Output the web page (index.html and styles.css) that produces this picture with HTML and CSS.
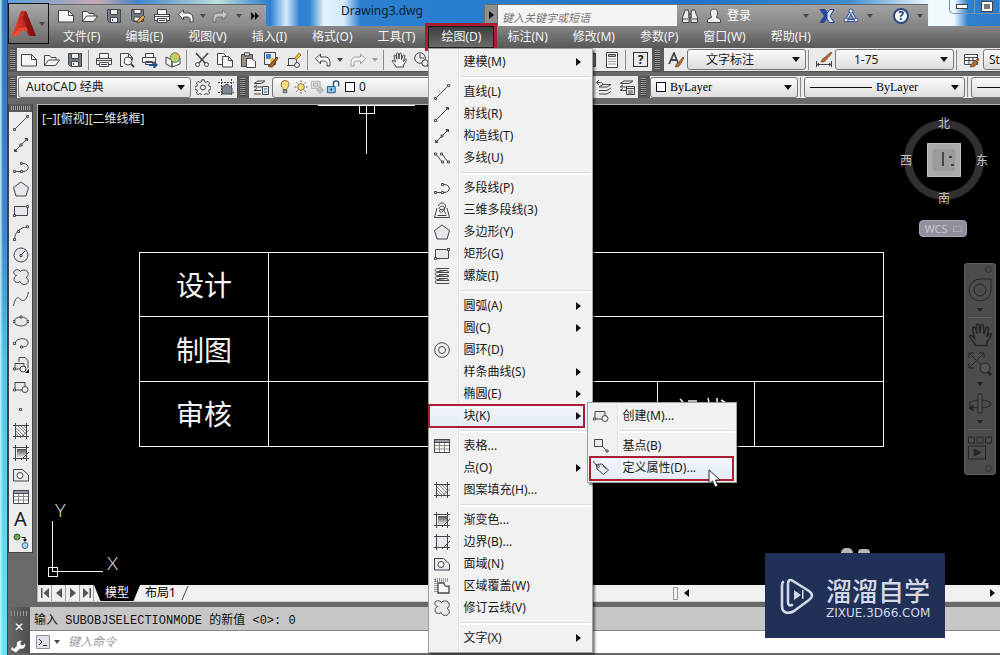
FILE: index.html
```html
<!DOCTYPE html>
<html lang="zh-CN">
<head>
<meta charset="utf-8">
<title>Drawing3.dwg</title>
<link rel="stylesheet" href="styles.css">
</head>
<body>
<svg class="sprite" aria-hidden="true">
  <symbol id="new" viewBox="0 0 16 16"><path class="paper" d="M.5 2.500h10l5 5v6.500H.5z"/><path d="M10.500 2.500v5h5"/></symbol>
  <symbol id="open" viewBox="0 0 16 16"><path class="paper" d="M.5 13.500v-10h5l1.500 2h5v3"/><path class="paper" d="M.5 13.500l4-5.500h11l-4 5.500z"/></symbol>
  <symbol id="save" viewBox="0 0 16 16"><path class="slate" d="M1.500 1.500h13v13h-11l-2-2z"/><path fill="#eee" d="M4.500 1.500h7v5h-7zM4.500 9.500h7v5h-7z"/><path d="M6.500 11v2"/></symbol>
  <symbol id="saveas" viewBox="0 0 16 16"><path class="slate" d="M1.500 1.500h12v12h-10l-2-2z"/><path fill="#eee" d="M4 1.500h7v4H4zM4 9h6v4H4z"/><path fill="#e8a440" stroke="#6b4a20" d="M7 15l1-3 5-5 2 2-5 5z"/></symbol>
  <symbol id="print" viewBox="0 0 16 16"><path class="paper" d="M3.500 6V1.500h9V6M.5 6.500h15v6H.5z"/><path class="paper" d="M3.500 10.500h9v4h-9z"/><path d="M1 8.500h14M5 12.500h6"/></symbol>
  <symbol id="preview" viewBox="0 0 16 16"><path class="paper" d="M4 14.500H1.500v-13h8l4 4V8M9.500 1.500v4h4"/><circle cx="9" cy="9" r="4" fill="#f8f8f8"/><path stroke-width="2" d="M12 12l3 3"/></symbol>
  <symbol id="publish" viewBox="0 0 16 16"><path class="paper" d="M3.500 5V1.500h8V5M.5 5.500h13v5H.5zM3.500 9.500h7v3h-7z"/><path stroke="#1d4f91" stroke-width="2" d="M7 13h7M11.500 10l3 3-3 3"/></symbol>
  <symbol id="globe" viewBox="0 0 16 16"><path class="paper" d="M1 5l6 3v7l-6-3zM7 8l8-2v6l-8 3z"/><circle cx="10" cy="5.500" r="4.800" fill="#b4cf72" stroke="#6c7f3c"/><path fill="#e6b756" stroke="none" d="M10 1.500c3 0 4.500 2 4 4.500L10 5z"/></symbol>
  <symbol id="cut" viewBox="0 0 16 16"><path stroke-width="1.500" d="M2 1l9 10M14 1L5 11"/><circle cx="3.500" cy="12.500" r="2"/><circle cx="12.500" cy="12.500" r="2"/></symbol>
  <symbol id="copy" viewBox="0 0 16 16"><path class="paper" d="M.5 1.500h6l3 3v8h-9z"/><path class="paper" d="M5.500 4.500h6l4 4v6.500h-10zM11.500 4.500v4h4"/></symbol>
  <symbol id="paste" viewBox="0 0 16 16"><path fill="#9a8c80" d="M1.500 2.500h11v12h-11z"/><path fill="#ddd" d="M4.500.8h5v3h-5z"/><path fill="#fafafa" d="M6.500 6.500h5l4 3v6h-9z"/></symbol>
  <symbol id="match" viewBox="0 0 16 16"><path fill="#e9f0f7" d="M1.500.5h11v12h-11z"/><path fill="#4285c4" stroke="none" d="M3 2h5v5H3z"/><path fill="#e9bb4b" stroke="none" d="M7 6h4v4H7z"/><path fill="#a86427" stroke="#6a3c14" d="M8 15c-2 0-3-1-3-1 3 0 2-3 4-4l5-5 1 1-4 6c0 2-1 3-3 3z"/></symbol>
  <symbol id="blockedit" viewBox="0 0 16 16"><path d="M2.500 13V6.500h8v7H5M1 13.500h4"/><circle cx="11" cy="13" r="2.500" fill="#eee"/><path fill="#f0b93c" stroke="#a8762a" d="M9 6l4-5 2 2-5 5z"/></symbol>
  <symbol id="undo" viewBox="0 0 16 16"><path class="paper" d="M.5 6.500l5-4.500v3h4c4 0 6 2 5.500 9h-3c.5-4-.5-5-3-5H5.500v3z"/></symbol>
  <symbol id="redo" viewBox="0 0 16 16"><path class="paper" d="M15.500 6.500l-5-4.500v3h-4C2.500 5 .5 7 1 14h3c-.5-4 .5-5 3-5h3.500v3z"/></symbol>
  <symbol id="hand" viewBox="0 0 16 16"><path class="paper" d="M5 15c-1-3-3-4-4-6 1-1.500 2.500 0 3.500 1L3 4c0-1.500 1.500-1.500 2 0l1 3-.5-5c0-1.500 2-1.500 2 0L8 7l.5-5c.3-1.500 1.900-1.300 1.900.2L10.500 7.500 12 3.500c.6-1.300 2-.8 1.700.7L12.500 9.500l1.500-2c1-1 2 0 1.300 1L12.500 13v2z"/></symbol>
  <symbol id="zoomrt" viewBox="0 0 16 16"><circle cx="6" cy="6" r="5.300"/><path d="M6 2v4h4"/><circle cx="11" cy="11" r="3.200" fill="#eee"/><path stroke-width="2" d="M13.500 13.500l2 2"/></symbol>
  <symbol id="calc" viewBox="0 0 16 16"><path class="paper" d="M2.500.5h11v15h-11z"/><path fill="#aaa" d="M4.500 2.500h7v2h-7z"/><path stroke-dasharray="1 1" d="M4.500 7h8M4.500 9.500h8M4.500 12h8"/></symbol>
  <symbol id="textstyle" viewBox="0 0 16 16"><path stroke-width="1.800" d="M1 12L6 1l4 10M3 8h6"/><path fill="#b06c35" stroke="#6a3c14" stroke-width=".6" d="M7 15c1-1 1-4 3-4l5-6 1 1-4 7c-1 2-3 2-5 2z"/></symbol>
  <symbol id="dimstyle" viewBox="0 0 16 16"><path d="M.5 9v6M15.500 9v6M1 12.500h14M3 11l-2 1.500L3 14M13 11l2 1.500-2 1.500"/><path fill="#b06c35" stroke="#6a3c14" stroke-width=".6" d="M5 10c1-1 1-4 3-4l7-6 1 1-6 7c-1 2-3 2-5 2z"/></symbol>
  <symbol id="tablestyle" viewBox="0 0 16 16"><path class="paper" d="M.5 2.500h13v10H.5z"/><path d="M1 5.500h12M1 8.500h12M5 5v7M9 5v7"/><path fill="#b06c35" stroke="#6a3c14" stroke-width=".6" d="M6 15c1-1 1-4 3-4l5-5 1 1-3 6c-1 2-4 2-6 2z"/></symbol>
  <symbol id="gear" viewBox="0 0 16 16"><path d="M6.800.8h2.400l.5 2 1.500.6 1.800-1 1.600 1.600-1 1.800.6 1.500 2 .5v2.400l-2 .5-.6 1.500 1 1.800-1.600 1.600-1.800-1-1.500.6-.5 2H6.800l-.5-2-1.500-.6-1.800 1L1.400 14l1-1.800-.6-1.500-2-.5V7.800l2-.5.6-1.500-1-1.800L3 2.400l1.800 1 1.500-.6z"/><circle cx="8" cy="8.500" r="2.500"/></symbol>
  <symbol id="wsave" viewBox="0 0 16 16"><path stroke-dasharray="2 1" d="M3.500 0v16M13.500 0v16M0 3.500h16M0 13.500h16"/><path fill="#7c8794" d="M4 8l5-3 5 4v6H4z"/></symbol>
  <symbol id="layers" viewBox="0 0 16 16"><path d="M1 4.500l4-2.500h7L8 4.500zM1 8h8M1 8l3-2M1 11.500h7M1 11.500l3-2M1 15h7"/><path fill="#e4edf6" d="M9.500 7.500h6v8h-6z"/><path stroke="#1b5a96" d="M11 10h3M11 13h3"/></symbol>
  <symbol id="layerprev" viewBox="0 0 16 16"><path d="M3 8l4-2.500h8L11 8zM3 11.500h8l4-2.500M3 15h8l4-2.500M.5 3.500h4c2 0 2 1 2 2M3 1L.5 3.500 3 6"/></symbol>
  <symbol id="layerstate" viewBox="0 0 16 16"><path d="M1 4.500L5 2h9l-4 2.500zM1 8h7M1 8l3-2M1 11.500h6M1 11.500l3-2"/><path fill="#e8e8e8" d="M7.500 7.500h8v8h-8zM7.500 9.500h8M9 12h5M9 14h5"/></symbol>
  <symbol id="bulb" viewBox="0 0 16 16"><path fill="#f5de7a" stroke="#77662f" d="M6 11C6 9 3.500 8 3.500 5a4.500 4.500 0 019 0c0 3-2.500 4-2.500 6z"/><path fill="#bbb" d="M6 11.500h4v3H6z"/></symbol>
  <symbol id="sun" viewBox="0 0 16 16"><circle cx="8" cy="8" r="3.800" fill="#f5de7a" stroke="#77662f"/><path d="M8 .5v2M8 13.500v2M.5 8h2M13.500 8h2M2.700 2.700l1.400 1.400M12 12l1.400 1.400M2.700 13.300L4.100 12M12 4l1.400-1.400"/></symbol>
  <symbol id="freeze" viewBox="0 0 16 16"><g stroke="#aaa"><path fill="#e0e0e0" d="M1.500 1.500h10v8h-10z"/><path d="M4 4h5v3H4z"/><circle cx="11.500" cy="11.500" r="3" fill="#ddd"/><path d="M11.500 7v9M7 11.500h9"/></g></symbol>
  <symbol id="lock" viewBox="0 0 16 16"><path fill="#8ec7ea" stroke="#1c4f75" d="M1.500 7.500h9v7h-9z"/><path stroke="#1c4f75" stroke-width="1.500" d="M8.500 7V4c0-4 6-4 6 0v3M6 9.500v3"/></symbol>
  <symbol id="line" viewBox="0 0 16 16"><path d="M2 14L14 2"/><path class="node" d="M.5 13.500h2v2h-2zM13.500.5h2v2h-2z"/></symbol>
  <symbol id="ray" viewBox="0 0 16 16"><path d="M2 14L14 2"/><path class="node" d="M.5 13.500h2v2h-2z"/><path class="solid" d="M12 1.500h2.500V4z"/></symbol>
  <symbol id="xline" viewBox="0 0 16 16"><path d="M2 14L14 2"/><path class="node" d="M7 7h2v2H7z"/><path class="solid" d="M12 1.500h2.500V4zM1.500 12v2.500H4z"/></symbol>
  <symbol id="mline" viewBox="0 0 16 16"><path d="M2 4l6 8M8 4l6 8"/><path class="node" d="M.5 3h2v2h-2zM6.500 3h2v2h-2zM7.500 11h2v2h-2zM13.500 11h2v2h-2z"/></symbol>
  <symbol id="pline" viewBox="0 0 16 16"><path d="M1 12.500h9c7 0 7-8 0-8"/><path class="node" d="M.5 11.500h2v2h-2zM7.500 11.500h2v2h-2zM7.500 3.500h2v2h-2z"/></symbol>
  <symbol id="pline3" viewBox="0 0 16 16"><path d="M3 6L.5 15.500h15L13 6M3.500 13.500h9"/><path d="M4.500 4c0-4 7-4 7 0s-6 5-6 2c0-2 4-3 5 0s-5 6-5 3 5-2 6 3"/></symbol>
  <symbol id="poly" viewBox="0 0 16 16"><path class="shade" d="M8 1l7.500 5.500L13 15H3L.5 6.500z"/></symbol>
  <symbol id="rect" viewBox="0 0 16 16"><path class="shade" d="M1.500 3.500h13v9h-13z"/><path class="node" d="M.5 11.500h2v2h-2zM13.500 2.500h2v2h-2z"/></symbol>
  <symbol id="helix" viewBox="0 0 16 16"><path d="M15 .5H4c-4 0-4 3 0 3l8 1c3 0 3-2 0-2H5M15 4.500H4c-4 0-4 3 0 3l8 1c3 0 3-2 0-2H5M15 8.500H4c-4 0-4 3 0 3l8 1c3 0 3-2 0-2H5M15 12.500H4c-4 0-4 3 0 3h11"/></symbol>
  <symbol id="arc" viewBox="0 0 16 16"><path d="M1.500 14C2 7 7 2.500 14 2"/><path class="node" d="M.5 13.500h2v2h-2zM4.500 5.500h2v2h-2zM13.500.8h2v2h-2z"/></symbol>
  <symbol id="circle" viewBox="0 0 16 16"><circle class="shade" cx="8" cy="8" r="7"/><path d="M8 8l4-4"/><path class="node" d="M7 7.500h2v2H7z"/></symbol>
  <symbol id="cloud" viewBox="0 0 16 16"><path class="shade" d="M7.500 2.500C6 0 1 0 .8 3.500.8 5 2 6 3.500 6.500 0 8 0 13.500 4.500 13.500c1 0 2-.5 2.500-1 1 4 8 4 8.300-.5 0-2-1-3-2.300-3.500C16.500 7 16 1 11 1c-1.500 0-3 .5-3.500 1.500z"/></symbol>
  <symbol id="spline" viewBox="0 0 16 16"><path d="M.5 15C2 8 4 5 6.500 7.500S13 12 15.500 1"/></symbol>
  <symbol id="ellipse" viewBox="0 0 16 16"><ellipse class="shade" cx="8" cy="8.500" rx="7" ry="4.500"/><path class="node" d="M0 7.500h2v2H0zM14 7.500h2v2h-2zM7 3h2v2H7z"/></symbol>
  <symbol id="earc" viewBox="0 0 16 16"><path d="M2 8C3 3 14 2 15 7c.5 4-3 5-6 5"/><path class="node" d="M.5 7.500h2v2h-2zM7.500 11h2v2h-2z"/></symbol>
  <symbol id="insert" viewBox="0 0 16 16"><path class="shade" d="M6 5V.500h6l3 3V11"/><path class="shade" d="M2 12V6.500h9V12z"/><circle cx="10" cy="12" r="3" fill="#eee"/><path class="node" d="M.5 11h2v2h-2z"/><path fill="#111" stroke="none" d="M16 12v4h-4z"/></symbol>
  <symbol id="block" viewBox="0 0 16 16"><path class="shade" d="M2 11V3.500h10V11z"/><circle cx="12" cy="10.500" r="3" fill="#eee"/><path class="node" d="M.5 10h2v2h-2z"/></symbol>
  <symbol id="point" viewBox="0 0 16 16"><path class="node" d="M6.500 7.500h2v2h-2z"/></symbol>
  <symbol id="hatch" viewBox="0 0 16 16"><path d="M2.500 0v16M13.500 0v16M0 2.500h16M0 13.500h16"/><path stroke-width=".6" d="M3 5l8 8M3 8l5 5M3 11l2 2M5 3l8 8M8 3l5 5M11 3l2 2M7 15l9-8"/></symbol>
  <symbol id="gradient" viewBox="0 0 16 16"><path d="M2.500 0v16M13.500 0v16M0 2.500h16M0 13.500h16"/><path fill="url(#fade)" stroke="none" d="M4 4h9v5l-4 4H4z"/><path d="M8 15l8-8"/></symbol>
  <symbol id="boundary" viewBox="0 0 16 16"><path class="shade" d="M2.500 2.500h11v11h-11z"/><path d="M2.500 0v16M13.500 0v16M0 2.500h16M0 13.500h16M8 15l8-8"/></symbol>
  <symbol id="region" viewBox="0 0 16 16"><path class="shade" d="M.5 2.500h9l6 5.500v6H.5z"/><circle cx="7" cy="8.500" r="3" fill="#f7f7f7"/></symbol>
  <symbol id="wipe" viewBox="0 0 16 16"><path stroke-dasharray="1 1" d="M1 3h14M1 1h14M1 1v13M3 3v12"/><path fill="#fff" stroke-width="1.300" d="M4 5h6c0 3 2 4 5 3v7H4z"/></symbol>
  <symbol id="table" viewBox="0 0 16 16"><path fill="#fff" d="M.5 1.500h15v13H.5z"/><path fill="#9b9ba5" d="M.5 1.500h15v3H.5z"/><path d="M1 7.500h14M1 11h14M5.500 5v9M10.500 5v9" stroke="#888"/></symbol>
  <symbol id="addsel" viewBox="0 0 16 16"><circle cx="4" cy="4" r="3" fill="#6da852" stroke="#365c28"/><circle cx="12" cy="12.500" r="3" fill="#a9d5ef" stroke="#2e6f99"/><path stroke="#111" stroke-width="1.200" d="M8.500 4.500H12V8M10.500 6.500L12 8l1.500-1.500"/></symbol>
  <symbol id="donut" viewBox="0 0 16 16"><circle cx="8" cy="8" r="7.300"/><circle cx="8" cy="8" r="3.500"/></symbol>
  <symbol id="base" viewBox="0 0 16 16"><path class="shade" d="M1.500 1.500h8v7h-8z"/><path d="M9 8l5 5"/><path class="node" d="M13 12h2v2h-2z"/></symbol>
  <symbol id="tag" viewBox="0 0 16 16"><path class="shade" d="M3 4.500l6-.5 6.500 6-5 4.500L4 9z"/><path d="M.5 1l1 2.500 3 2M10 6l3.500 3"/><circle cx="5.500" cy="6.500" r="1"/></symbol>
  <symbol id="binoc" viewBox="0 0 16 16"><path fill="#eee" d="M2 6l1-4h3l1 4v8.500H.5V9zM9 6l1-4h3l1 4 1.500 3v5.500H9zM7 6h2v4H7z"/><path d="M1 11h5M10 11h5"/></symbol>
  <symbol id="user" viewBox="0 0 16 16"><path fill="#eee" d="M8 1c5 0 4 7 2 8l4.500 2.500v3H1.500v-3L6 9C4 8 3 1 8 1z"/></symbol>
  <symbol id="exchange" viewBox="0 0 16 16"><path fill="#27479c" stroke="#27479c" d="M1 1.500h5l3 4.500-1 4-3 4.500H1L5.500 8z"/><path fill="#dfe8fb" stroke="#27479c" d="M15 1.500h-4L8 5.500v5l2.500 4H15L11 8z"/></symbol>
  <symbol id="a360" viewBox="0 0 16 16"><path fill="#e7eefc" stroke="#27479c" d="M8 1.500l6.500 12h-13zM8 6l-3 5.500h6z"/><g fill="#fff" stroke="#27479c"><circle cx="8" cy="3" r="2"/><circle cx="3" cy="12" r="2"/><circle cx="13" cy="12" r="2"/></g></symbol>
  <symbol id="wheel" viewBox="0 0 24 24"><path d="M12 1h11v11a11 11 0 11-11-11z"/><circle cx="12" cy="12" r="6"/></symbol>
  <symbol id="extents" viewBox="0 0 24 24"><path d="M1 1l15 15M16 1L1 16M1 6V1h5M11 1h5v5M1 11v5h5"/><circle cx="17" cy="16" r="5" fill="#555"/><path stroke-width="3" d="M20 20l3 3"/></symbol>
  <symbol id="orbit" viewBox="0 0 24 24"><ellipse cx="12" cy="13" rx="11" ry="4"/><path fill="#555" d="M10 22V3h4v19z"/><path class="solid" d="M5 14v6l-4-3z"/></symbol>
  <symbol id="motion" viewBox="0 0 24 24"><path d="M.5 1h6v6h-6zM9 1h6v6H9zM17.500 1h6v6h-6zM.5 10h17v13H.5z"/><path class="solid" d="M6 13l7 3.500L6 20z"/></symbol>
  <symbol id="wrench" viewBox="0 0 16 16"><path fill="#fff" stroke="none" d="M1 10l2 2 3-3c-1-4 2-6 5-5L9 6l1 2 2 .5 2-2c1 4-2 6-5 5l-4 4-5-3z"/></symbol>
  <linearGradient id="fade" x1="0" y1="0" x2="0" y2="1"><stop offset="0" stop-color="#555"/><stop offset="1" stop-color="#eee"/></linearGradient>
  <linearGradient id="red" x1="0" y1="0" x2="1" y2="0"><stop offset="0" stop-color="#f0442c"/><stop offset="1" stop-color="#8c0c10"/></linearGradient>
</svg>

<div class="app">
  <header class="head">
    <button class="appbtn" aria-label="应用程序菜单">
      <svg class="appbtn__logo" viewBox="0 0 24 26"><path fill="url(#red)" d="M9 0h5l10 25h-7l-3-5H9l-3 5H0z"/><path fill="#7d0c10" d="M14 0l10 25h-5L11 7z" opacity=".6"/><path fill="#f5614a" d="M8 17l6-1 2 4-7 0-3 5H1z" opacity=".6"/></svg>
      <span class="caret"></span>
    </button>
    <div class="title">
      <div class="quick">
        <button aria-label="新建"><svg class="icon"><use href="#new"/></svg></button>
        <button aria-label="打开"><svg class="icon"><use href="#open"/></svg></button>
        <button aria-label="保存"><svg class="icon"><use href="#save"/></svg></button>
        <button aria-label="另存为"><svg class="icon"><use href="#saveas"/></svg></button>
        <button aria-label="打印"><svg class="icon"><use href="#print"/></svg></button>
        <button aria-label="放弃"><svg class="icon"><use href="#undo"/></svg></button>
        <span class="slot"><span class="caret"></span></span>
        <button class="faded" aria-label="重做"><svg class="icon"><use href="#redo"/></svg></button>
        <span class="slot slot--wide"><span class="caret"></span></span>
        <button class="more" aria-label="更多"><i class="tri"></i><i class="tri"></i></button>
      </div>
      <h1 class="title__name">Drawing3.dwg</h1>
      <button class="expand" aria-label="展开搜索"><i class="tri"></i></button>
      <input class="search" type="text" placeholder="键入关键字或短语" aria-label="搜索">
      <div class="info">
        <button aria-label="搜索"><svg class="icon"><use href="#binoc"/></svg></button>
        <button class="login"><svg class="icon"><use href="#user"/></svg>登录</button>
        <span class="caret caret--push"></span>
        <button aria-label="Exchange"><svg class="icon"><use href="#exchange"/></svg></button>
        <button aria-label="A360"><svg class="icon"><use href="#a360"/></svg></button>
        <span class="caret"></span>
        <button class="help" aria-label="帮助">?</button>
        <span class="caret"></span>
      </div>
      <div class="winctl">
        <button aria-label="最小化"><i class="min"></i></button>
        <button aria-label="最大化"><i class="max"></i></button>
      </div>
    </div>
    <nav class="menubar">
      <button>文件(F)</button><button>编辑(E)</button><button>视图(V)</button><button>插入(I)</button><button>格式(O)</button><button>工具(T)</button>
      <div class="menubar__open">
        <button class="is-open">绘图(D)</button>
        <ul class="menu">
          <li><button><span></span>建模(M)<i class="tri"></i></button></li>
          <li class="sep"></li>
          <li><button><svg class="icon"><use href="#line"/></svg>直线(L)</button></li>
          <li><button><svg class="icon"><use href="#ray"/></svg>射线(R)</button></li>
          <li><button><svg class="icon"><use href="#xline"/></svg>构造线(T)</button></li>
          <li><button><svg class="icon"><use href="#mline"/></svg>多线(U)</button></li>
          <li class="sep"></li>
          <li><button><svg class="icon"><use href="#pline"/></svg>多段线(P)</button></li>
          <li><button><svg class="icon"><use href="#pline3"/></svg>三维多段线(3)</button></li>
          <li><button><svg class="icon"><use href="#poly"/></svg>多边形(Y)</button></li>
          <li><button><svg class="icon"><use href="#rect"/></svg>矩形(G)</button></li>
          <li><button><svg class="icon"><use href="#helix"/></svg>螺旋(I)</button></li>
          <li class="sep"></li>
          <li><button><span></span>圆弧(A)<i class="tri"></i></button></li>
          <li><button><span></span>圆(C)<i class="tri"></i></button></li>
          <li><button><svg class="icon"><use href="#donut"/></svg>圆环(D)</button></li>
          <li><button><span></span>样条曲线(S)<i class="tri"></i></button></li>
          <li><button><span></span>椭圆(E)<i class="tri"></i></button></li>
          <li class="marked"><button><span></span>块(K)<i class="tri"></i></button>
            <ul class="menu menu--sub">
              <li><button><svg class="icon"><use href="#block"/></svg>创建(M)...</button></li>
              <li class="sep"></li>
              <li><button><svg class="icon"><use href="#base"/></svg>基点(B)</button></li>
              <li class="marked"><button><svg class="icon"><use href="#tag"/></svg>定义属性(D)...</button>
                <svg class="cursor" viewBox="0 0 14 20"><path d="M1 1v14l3.500-3 2.500 6 3-1-2.500-6H12z" fill="#fff" stroke="#222"/></svg>
              </li>
            </ul>
          </li>
          <li class="sep"></li>
          <li><button><svg class="icon"><use href="#table"/></svg>表格...</button></li>
          <li><button><span></span>点(O)<i class="tri"></i></button></li>
          <li><button><svg class="icon"><use href="#hatch"/></svg>图案填充(H)...</button></li>
          <li class="sep"></li>
          <li><button><svg class="icon"><use href="#gradient"/></svg>渐变色...</button></li>
          <li><button><svg class="icon"><use href="#boundary"/></svg>边界(B)...</button></li>
          <li><button><svg class="icon"><use href="#region"/></svg>面域(N)</button></li>
          <li><button><svg class="icon"><use href="#wipe"/></svg>区域覆盖(W)</button></li>
          <li><button><svg class="icon"><use href="#cloud"/></svg>修订云线(V)</button></li>
          <li class="sep"></li>
          <li><button><span></span>文字(X)<i class="tri"></i></button></li>
        </ul>
      </div>
      <button>标注(N)</button><button>修改(M)</button><button>参数(P)</button><button>窗口(W)</button><button>帮助(H)</button>
    </nav>
  </header>

  <div class="bar">
    <span class="grip"></span>
    <button aria-label="新建"><svg class="icon"><use href="#new"/></svg></button>
    <button aria-label="打开"><svg class="icon"><use href="#open"/></svg></button>
    <button aria-label="保存"><svg class="icon"><use href="#save"/></svg></button>
    <span class="div"></span>
    <button aria-label="打印"><svg class="icon"><use href="#print"/></svg></button>
    <button aria-label="预览"><svg class="icon"><use href="#preview"/></svg></button>
    <button aria-label="发布"><svg class="icon"><use href="#publish"/></svg></button>
    <button aria-label="三维打印"><svg class="icon"><use href="#globe"/></svg></button>
    <span class="div"></span>
    <button aria-label="剪切"><svg class="icon"><use href="#cut"/></svg></button>
    <button aria-label="复制"><svg class="icon"><use href="#copy"/></svg></button>
    <button aria-label="粘贴"><svg class="icon"><use href="#paste"/></svg></button>
    <button aria-label="特性匹配"><svg class="icon"><use href="#match"/></svg></button>
    <button aria-label="块编辑器"><svg class="icon"><use href="#blockedit"/></svg></button>
    <span class="div"></span>
    <button aria-label="放弃"><svg class="icon"><use href="#undo"/></svg></button>
    <span class="slot"><span class="caret"></span></span>
    <button class="faded" aria-label="重做"><svg class="icon"><use href="#redo"/></svg></button>
    <span class="slot faded"><span class="caret"></span></span>
    <span class="div"></span>
    <button aria-label="平移"><svg class="icon"><use href="#hand"/></svg></button>
    <button aria-label="实时缩放"><svg class="icon"><use href="#zoomrt"/></svg></button>
    <button aria-label="窗口缩放"><svg class="icon"><use href="#preview"/></svg></button>
    <button aria-label="上一个"><svg class="icon"><use href="#zoomrt"/></svg></button>
    <button aria-label="特性"><svg class="icon"><use href="#table"/></svg></button>
    <span class="div"></span>
    <button aria-label="设计中心"><svg class="icon"><use href="#table"/></svg></button>
    <button aria-label="工具选项板"><svg class="icon"><use href="#calc"/></svg></button>
    <button aria-label="图纸集"><svg class="icon"><use href="#layers"/></svg></button>
    <button aria-label="标记集"><svg class="icon"><use href="#save"/></svg></button>
    <button aria-label="计算器"><svg class="icon"><use href="#calc"/></svg></button>
    <span class="div"></span>
    <button class="boxed" aria-label="帮助"><b>?</b></button>
    <span class="grip grip--mid"></span>
    <button aria-label="文字样式管理"><svg class="icon"><use href="#textstyle"/></svg></button>
    <div class="combo combo--style"><select aria-label="文字样式"><option>文字标注</option></select><span class="drop"></span></div>
    <span class="div"></span>
    <button aria-label="标注样式管理"><svg class="icon"><use href="#dimstyle"/></svg></button>
    <div class="combo combo--style"><select aria-label="标注样式"><option>1-75</option></select><span class="drop"></span></div>
    <span class="div"></span>
    <button aria-label="表格样式管理"><svg class="icon"><use href="#tablestyle"/></svg></button>
    <div class="combo combo--rest"><select aria-label="表格样式"><option>Standard</option></select></div>
  </div>

  <div class="bar bar--second">
    <span class="grip"></span>
    <div class="combo combo--space"><select aria-label="工作空间"><option>AutoCAD 经典</option></select><span class="drop"></span></div>
    <button aria-label="工作空间设置"><svg class="icon"><use href="#gear"/></svg></button>
    <button aria-label="我的工作空间"><svg class="icon"><use href="#wsave"/></svg></button>
    <span class="grip grip--mid"></span>
    <button aria-label="图层特性"><svg class="icon"><use href="#layers"/></svg></button>
    <div class="combo combo--layer">
      <svg class="icon"><use href="#bulb"/></svg><svg class="icon"><use href="#sun"/></svg><svg class="icon"><use href="#freeze"/></svg><svg class="icon"><use href="#lock"/></svg><i class="swatch"></i>
      <select aria-label="图层"><option>0</option></select><span class="drop"></span>
    </div>
    <button aria-label="上一个图层"><svg class="icon"><use href="#layerprev"/></svg></button>
    <button aria-label="图层状态"><svg class="icon"><use href="#layerstate"/></svg></button>
    <span class="grip grip--mid"></span>
    <div class="combo combo--color serif"><i class="swatch"></i><select aria-label="颜色"><option>ByLayer</option></select><span class="drop"></span></div>
    <span class="div"></span>
    <div class="combo combo--ltype serif"><i class="rule"></i><select aria-label="线型"><option>ByLayer</option></select><span class="drop"></span></div>
    <span class="div"></span>
    <div class="combo combo--rest serif"><i class="rule"></i><select aria-label="线宽"><option>ByLayer</option></select></div>
  </div>

  <main class="work">
    <aside class="draw">
      <span class="draw__grip"></span>
      <button aria-label="直线"><svg class="icon"><use href="#line"/></svg></button>
      <button aria-label="构造线"><svg class="icon"><use href="#xline"/></svg></button>
      <button aria-label="多段线"><svg class="icon"><use href="#pline"/></svg></button>
      <button aria-label="多边形"><svg class="icon"><use href="#poly"/></svg></button>
      <button aria-label="矩形"><svg class="icon"><use href="#rect"/></svg></button>
      <button aria-label="圆弧"><svg class="icon"><use href="#arc"/></svg></button>
      <button aria-label="圆"><svg class="icon"><use href="#circle"/></svg></button>
      <button aria-label="修订云线"><svg class="icon"><use href="#cloud"/></svg></button>
      <button aria-label="样条曲线"><svg class="icon"><use href="#spline"/></svg></button>
      <button aria-label="椭圆"><svg class="icon"><use href="#ellipse"/></svg></button>
      <button aria-label="椭圆弧"><svg class="icon"><use href="#earc"/></svg></button>
      <button aria-label="插入块"><svg class="icon"><use href="#insert"/></svg></button>
      <button aria-label="创建块"><svg class="icon"><use href="#block"/></svg></button>
      <button aria-label="点"><svg class="icon"><use href="#point"/></svg></button>
      <button aria-label="图案填充"><svg class="icon"><use href="#hatch"/></svg></button>
      <button aria-label="渐变色"><svg class="icon"><use href="#gradient"/></svg></button>
      <button aria-label="面域"><svg class="icon"><use href="#region"/></svg></button>
      <button aria-label="表格"><svg class="icon"><use href="#table"/></svg></button>
      <button class="draw__text" aria-label="多行文字">A</button>
      <button aria-label="添加选定对象"><svg class="icon"><use href="#addsel"/></svg></button>
    </aside>
    <section class="view">
      <div class="canvas">
        <p class="canvas__label">[−][俯视][二维线框]</p>
        <svg class="sheet" width="962" height="480" viewBox="38 105 962 480">
          <g fill="none" stroke="#f4f4f4" shape-rendering="crispEdges">
            <path d="M139.500 252.500h744v194h-744zM268.500 252v194M139 316.500h744M139 381.500h744M657.500 381v65M754.500 381v65"/>
            <path d="M318 105.500h97M366.500 105v49M359.500 105v8.500h15V105"/>
            <path d="M52.500 521v50M52 571.500h51M48.500 567.500h9v9h-9z"/>
          </g>
          <path stroke="#f4f4f4" stroke-width="1.500" fill="none" d="M680 399l3 3M688 401h9M708 398l1 5M717 398v5M721 400l5 3"/>
          <g fill="#f4f4f4">
            <text class="cad" x="176" y="296">设计</text>
            <text class="cad" x="176" y="361">制图</text>
            <text class="cad" x="176" y="425">审核</text>
            <text class="ucs" x="55" y="517">Y</text>
            <text class="ucs" x="107" y="570">X</text>
          </g>
        </svg>
        <div class="cube">
          <svg width="90" height="90" viewBox="-45 -45 90 90"><circle r="36" fill="none" stroke="#303030" stroke-width="8"/><path fill="#aaa" stroke="#c0c0c0" d="M-16.500-16.500h33v33h-33z"/><path fill="#9c9c9c" d="M-11-11h22v22h-22z"/><path stroke="#444" stroke-width="2" d="M-1-8V6M5-3h3M7 5h3"/></svg>
          <span class="n">北</span><span class="s">南</span><span class="w">西</span><span class="e">东</span>
        </div>
        <button class="wcs">WCS<i></i></button>
        <div class="nav">
          <i class="nav__dot"></i>
          <svg><use href="#wheel"/></svg><span class="caret"></span><hr>
          <svg><use href="#hand"/></svg>
          <svg><use href="#extents"/></svg><span class="caret"></span>
          <svg><use href="#orbit"/></svg><span class="caret"></span><hr>
          <svg><use href="#motion"/></svg>
          <i class="nav__dot"></i>
        </div>
      </div>
      <div class="tabs">
        <button class="step" aria-label="第一个"><svg viewBox="0 0 10 10"><path d="M1 0h1.500v10H1zM9 0v10L3.500 5z"/></svg></button>
        <button class="step" aria-label="上一个"><svg viewBox="0 0 10 10"><path d="M8 0v10L2 5z"/></svg></button>
        <button class="step" aria-label="下一个"><svg viewBox="0 0 10 10"><path d="M2 0v10l6-5z"/></svg></button>
        <button class="step" aria-label="最后一个"><svg viewBox="0 0 10 10"><path d="M7.500 0H9v10H7.500zM1 0v10l5.500-5z"/></svg></button>
        <button class="tab tab--on">模型</button>
        <button class="tab">布局1</button>
        <svg class="slash" viewBox="0 0 8 16"><path d="M1 15L7 1" stroke="#444" fill="none"/></svg>
        <div class="scroll"><i class="scroll__split"></i><i class="tri tri--left"></i><i class="tri scroll__end"></i></div>
      </div>
    </section>
  </main>

  <footer class="cmd">
    <div class="cmd__side"><i class="cmd__grip"></i><button aria-label="关闭">✕</button><button aria-label="自定义"><svg class="icon"><use href="#wrench"/></svg></button></div>
    <div class="cmd__body">
      <p class="cmd__log">输入 SUBOBJSELECTIONMODE 的新值 &lt;0&gt;: 0</p>
      <div class="cmd__line">
        <svg class="prompt" viewBox="0 0 14 14"><path fill="#dfe3e8" stroke="#8b93a0" d="M.5.5h13v13H.5z"/><path fill="none" stroke="#222" d="M3 4l3 3-3 3M7 10.500h4"/></svg>
        <span class="caret"></span>
        <input type="text" placeholder="键入命令" aria-label="命令行">
      </div>
    </div>
  </footer>

  <div class="mark">
    <i class="mark__ear"></i><i class="mark__ear mark__ear--r"></i>
    <svg class="mark__logo" viewBox="0 0 34 36"><g fill="none" stroke="#d3d8e6" stroke-linecap="round" stroke-linejoin="round"><path stroke-width="2.600" d="M12 27c-3 1-4 0-4-3V6c0-4 2-5 5-3l16 10c4 3 4 6 0 9L14 33c-7 4-12 1-12-5V8c0-2 0-3 1-4"/></g><path fill="#d3d8e6" d="M14 12v10l7-5zM22 12h1.500v9H22z"/></svg>
    <div class="mark__text"><p class="mark__name">溜溜自学</p><p class="mark__url">ZIXUE.3D66.COM</p></div>
  </div>
</div>
</body>
</html>
```
FILE: styles.css
```css
* { box-sizing: border-box; }
body, h1, p, ul { margin: 0; padding: 0; }
body {
  height: 100vh;
  overflow: hidden;
  font: 12px/16px "Noto Sans", "Noto Sans CJK SC", sans-serif;
  color: #1a1a1a;
  background: linear-gradient(90deg, #c8f3fb 0, rgba(160, 230, 250, 0) 3px), linear-gradient(#2f74c4, #3a86d0 35%, #4fc4ea 55%, #63e6f2);
}
button, input, select { font: inherit; color: inherit; border: 0; padding: 0; margin: 0; background: none; outline: 0; }
ul { list-style: none; }
.sprite { position: absolute; width: 0; height: 0; }
.icon { width: 16px; height: 16px; flex: none; fill: none; stroke: #45454c; color: #45454c; overflow: visible; }
.paper { fill: var(--paper, #f6f6f6); }
.shade { fill: #e6e8ec; }
.slate { fill: #6f7a88; }
.node { fill: #fff; }
.solid { fill: currentColor; }
.caret { width: 0; height: 0; flex: none; border: 3px solid transparent; border-top: 4px solid #4a4a4a; border-bottom: 0; }
.tri { width: 0; height: 0; flex: none; border: 4px solid transparent; border-left: 5px solid #111; border-right: 0; }
.tri--left { border-left: 0; border-right: 5px solid #111; }
.faded { opacity: .45; }

.app { height: 100%; margin-left: 7px; display: flex; flex-direction: column; background: #696969; border-left: 1px solid #2b4764; }

/* title and menu */
.head { display: grid; grid-template: 26px 22px / 41px 1fr; position: relative; z-index: 2; }
.appbtn { grid-area: 1 / 1 / 3 / 2; z-index: 1; height: 41px; margin-top: 3px; border: 1px solid #111; background: linear-gradient(#a9a9a9, #6c6c6c); display: flex; align-items: center; justify-content: center; gap: 3px; }
.appbtn__logo { width: 24px; height: 26px; }
.title {
  grid-area: 1 / 1 / 2 / 3; padding-left: 41px; display: flex; align-items: flex-end; min-width: 0;
  background: linear-gradient(90deg, #5aa2e0 0, #c9a8b4 90px, #3f86cc 130px, #bfe0dc 210px, #2a7fd0 262px, #d7ecfa 278px, #2e7fd0 292px, #3486d4 302px, #e4f2fc 316px, #d6eafa 336px, #2c80d0 352px, #1f76cb 700px, #3d8dcf 840px, #f2f9fd 922px, #eef7fd 946px, #2f80cd 960px, #2c7bc8);
}
.quick { height: 22px; width: 217px; padding-left: 5px; display: flex; align-items: center; background: linear-gradient(#a2a2a2, #8b8b8b); border-top: 1px solid #666; }
.quick button { width: 24px; display: flex; justify-content: center; }
.slot { width: 12px; flex: none; display: flex; justify-content: center; }
.quick .slot { width: 10px; }
.quick .slot--wide { width: 14px; }
.quick .more { width: 18px; }
.more .tri { border-width: 4px 0 4px 4px; }
.title__name { flex: 1; padding: 0 0 4px 14px; font-size: 12px; line-height: 16px; font-weight: 400; text-align: center; align-self: center; color: #0b1d33; }
.expand { width: 14px; height: 22px; display: grid; place-items: center; background: #8f8f8f; border: 1px solid #6b6b6b; }
.search { width: 179px; height: 22px; padding: 4px 4px 0; background: #f4f4f4; border-top: 1px solid #777; font-size: 11px; font-style: italic; }
.search::placeholder { color: #777; opacity: 1; }
.info { width: 251px; height: 22px; padding: 0 5px; display: flex; align-items: center; gap: 8px; background: linear-gradient(#a2a2a2, #868686); border-top: 1px solid #666; color: #fff; }
.info button { display: flex; align-items: center; }
.info .login { gap: 5px; }
.caret--push { margin-left: auto; margin-right: 2px; }
.info .help { width: 16px; height: 16px; margin-left: 12px; justify-content: center; border: 2px solid #2b4a80; border-radius: 50%; background: #f4f8ff; color: #1d3f7c; font-weight: 700; line-height: 12px; }
.winctl { width: 72px; height: 14px; padding-left: 21px; align-self: flex-start; display: flex; }
.winctl button { flex: 1; display: grid; place-items: center; border: 1px solid #7292b0; border-top: 0; }
.winctl button:first-child { border-radius: 0 0 0 5px; border-right: 0; }
.min { width: 12px; height: 5px; background: #fff; border: 1px solid #444; }
.max { width: 10px; height: 9px; background: #777; border: 2px solid #fff; outline: 1px solid #444; }
.menubar { grid-area: 2 / 1 / 3 / 3; padding-left: 43px; display: flex; gap: 1px; background: linear-gradient(#888, #727272 40%, #595959); color: #f2f2f2; }
.menubar > button { padding: 0 12px; white-space: nowrap; }
.menubar__open { position: relative; }
.is-open { width: 66px; height: 22px; background: linear-gradient(#3d3d3d, #6c6c6c); border: 1px solid #1c1c1c; outline: 3px solid #a81f33; }

.menu { position: absolute; left: 0; top: 22px; width: 165px; padding: 2px 1px 3px 0; color: #1a1a1a; border: 1px solid #a0a0a0; box-shadow: 2px 2px 2px rgba(0, 0, 0, .5); background: linear-gradient(90deg, #f1f1f1 29px, #dedede 29px, #dedede 30px, #fff 30px, #fff 31px, #f1f1f1 31px); }
.menu li { position: relative; }
.menu li > button { width: 100%; height: 22px; display: grid; grid-template-columns: 26px 1fr auto; column-gap: 8px; align-items: center; padding-right: 10px; text-align: left; white-space: nowrap; }
.menu li > button > .icon { justify-self: center; }
.menu .sep { height: 8px; margin-left: 31px; padding-top: 3px; }
.menu .sep::before { content: ""; display: block; height: 2px; background: #fff; border-top: 1px solid #dcdcdc; }
.menu .marked > button { background: linear-gradient(rgba(241, 246, 252, .9), rgba(228, 236, 247, .9)); }
.menu .marked::after { content: ""; position: absolute; inset: -1px 6px -1px -1px; border: 2px solid #a81f33; pointer-events: none; }
.menu--sub { left: 158px; top: -3px; width: 150px; z-index: 2; }
.menu--sub .marked::after { inset: -1px 1px -2px 1px; }
.cursor { position: absolute; right: 13px; top: 12px; width: 14px; height: 20px; z-index: 1; }

/* toolbars */
.bar { display: flex; align-items: center; flex: none; height: 24px; overflow: hidden; background: #eaeaea; border-bottom: 1px solid #555; }
.bar--second { height: 22px; margin: 4px 0 6px; border-bottom: 0; }
.bar button { width: 23px; height: 22px; flex: none; display: grid; place-items: center; }
.boxed b { width: 15px; height: 15px; border: 1px solid #333; line-height: 13px; }
.grip { width: 9px; align-self: stretch; flex: none; border: 2px solid #5a5a5a; background: repeating-linear-gradient(#9a9a9a 0 1px, #3e3e3e 1px 2px); }
.grip--mid { width: 12px; border-width: 2px 4px 2px 3px; }
.div { width: 6px; height: 20px; flex: none; background: linear-gradient(90deg, transparent 2px, #8c8c8c 2px, #8c8c8c 3px, transparent 3px); }
.combo { height: 21px; flex: none; display: flex; align-items: center; padding: 0 5px; background: linear-gradient(#fafafa, #dedede); border: 1px solid #777; border-radius: 3px; }
.combo select { flex: 1; min-width: 0; appearance: none; line-height: 18px; }
.drop { border: 4px solid transparent; border-top: 5px solid #111; border-bottom: 0; }
.combo--style { width: 119px; padding-left: 18px; }
.combo--rest { flex: 1 0 60px; }
.combo--space { width: 173px; padding-left: 7px; margin-left: 1px; }
.combo--layer { width: 320px; }
.combo--layer .icon { width: 14px; height: 14px; margin-right: 2px; }
.combo--layer .swatch { margin-left: 3px; }
.combo--color { width: 148px; }
.combo--ltype { width: 161px; }
.swatch { width: 10px; height: 10px; flex: none; margin-right: 4px; border: 1px solid #111; background: #fff; }
.rule { width: 62px; height: 1px; flex: none; margin-right: 4px; background: #111; }
.serif { font: 12px/16px "Liberation Serif", serif; color: #000; }

/* workspace */
.work { flex: 1; min-height: 0; display: flex; gap: 4px; }
.draw { width: 25px; align-self: flex-start; display: flex; flex-direction: column; background: #ececee; border: 1px solid #444; border-top: 0; }
.draw__grip { height: 8px; border: 2px solid #5a5a5a; background: repeating-linear-gradient(90deg, #aaa 0 1px, #444 1px 2px); }
.draw button { height: 22px; display: grid; place-items: center; }
.draw .draw__text { font: 20px/22px "Noto Sans", sans-serif; }
.view { flex: 1; min-width: 0; display: flex; flex-direction: column; border: 1px solid #b5b5b5; border-width: 1px 0 0 1px; }
.canvas { position: relative; flex: 1; overflow: hidden; background: #000; color: #e4e4e4; }
.canvas__label { position: absolute; left: 4px; top: 6px; font-size: 12px; }
.sheet { position: absolute; left: 0; top: 0; }
.cad { font: 28px "Noto Sans CJK SC", sans-serif; }
.ucs { font: 300 18px Lato, sans-serif; }
.cube { position: absolute; right: 11px; top: 10px; width: 90px; height: 90px; font: 12px/14px "Noto Sans CJK SC", sans-serif; color: #c4c4c4; }
.cube span { position: absolute; }
.cube .n { left: 39px; top: 1px; }
.cube .s { left: 39px; bottom: 0; }
.cube .w { left: 1px; top: 38px; }
.cube .e { right: 1px; top: 38px; }
.wcs { position: absolute; right: 33px; top: 115px; width: 48px; height: 17px; display: flex; align-items: center; justify-content: center; gap: 5px; border: 1px solid #a5a5b0; border-radius: 4px; background: #8f909b; color: #c8c8d0; font-size: 11px; line-height: 12px; }
.wcs i { width: 9px; height: 6px; border: 1px solid #a9a9b5; }
.nav { --paper: none; position: absolute; right: 4px; top: 158px; width: 32px; height: 212px; padding: 2px 3px; display: flex; flex-direction: column; align-items: center; justify-content: space-between; border: 1px solid #5e5e5e; border-radius: 3px; background: #4c4c4c; }
.nav svg { width: 24px; height: 24px; fill: none; stroke: #262626; color: #262626; }
.nav hr { width: 100%; margin: 0; border: 0; border-top: 1px solid #606060; }
.nav .caret { border-top-color: #222; }
.nav__dot { width: 7px; height: 7px; align-self: flex-end; border: 1px solid #2c2c2c; border-radius: 50%; }
.tabs { height: 17px; flex: none; display: flex; background: #f0f0f0; border-bottom: 1px solid #d2d2d2; color: #000; }
.step { width: 14px; display: grid; place-items: center; border-right: 1px solid #a0a0a0; }
.step svg { width: 10px; height: 10px; fill: #555; }
.tab { padding: 0 5px; line-height: 16px; }
.tab--on { width: 46px; background: #000; color: #fff; clip-path: polygon(0 0, 100% 0, 86% 100%, 14% 100%); }
.slash { width: 8px; height: 16px; }
.scroll { flex: 1; display: flex; align-items: center; padding: 0 5px 0 484px; gap: 6px; }
.scroll__split { width: 5px; height: 13px; border: 1px solid #999; }
.scroll__end { margin-left: auto; }

/* command line */
.cmd { height: 48px; flex: none; margin-top: 5px; display: flex; border-bottom: 2px solid #666; }
.cmd__side { width: 22px; flex: none; display: flex; flex-direction: column; align-items: center; justify-content: space-between; color: #fff; background: linear-gradient(90deg, #6a6a6a, #4d4d4d); overflow: hidden; padding-top: 4px; }
.cmd__side button { height: 16px; line-height: 16px; }
.cmd__grip { width: 17px; height: 5px; background: repeating-linear-gradient(90deg, #999 0 1px, #555 1px 3px); }
.cmd__body { flex: 1; min-width: 0; }
.cmd__log { height: 24px; padding: 5px 4px 0; font: 12px/18px "Liberation Mono", "Noto Sans CJK SC", monospace; background: #c6c6c6; border-bottom: 1px solid #888; color: #111; }
.cmd__line { height: 22px; display: flex; align-items: center; gap: 4px; padding-left: 6px; background: #fff; }
.prompt { width: 14px; height: 14px; }
.cmd__line input { flex: 1; margin-left: 4px; }
.cmd__line input::placeholder { color: #999; font-style: italic; opacity: 1; }

/* watermark */
.mark { position: fixed; right: 55px; bottom: 17px; z-index: 3; width: 180px; height: 85px; padding: 0 12px 0 15px; display: flex; align-items: center; gap: 12px; background: #213056; color: #d3d8e6; }
.mark__logo { width: 34px; height: 36px; flex: none; }
.mark__text { display: grid; gap: 0; }
.mark__name { font: 500 26px/34px "Noto Sans CJK SC", sans-serif; white-space: nowrap; }
.mark__url { font: 12px/12px "DejaVu Sans", sans-serif; white-space: nowrap; }
.mark__ear { position: absolute; z-index: -1; left: 76px; top: -5px; width: 12px; height: 5px; border-radius: 6px 6px 0 0; background: #b9b9b9; }
.mark__ear--r { left: 93px; top: -4px; height: 4px; }
```
